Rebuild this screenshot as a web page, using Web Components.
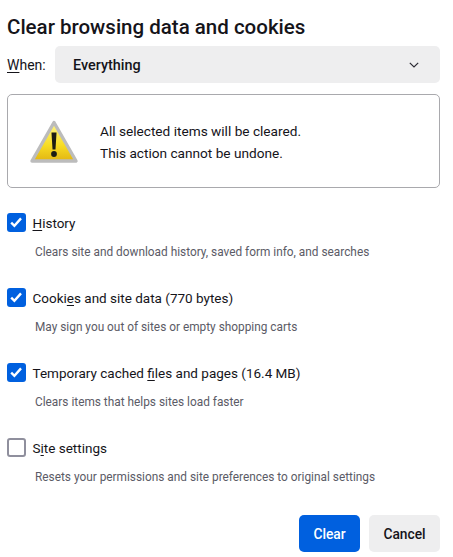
<!DOCTYPE html>
<html>
<head>
<meta charset="utf-8">
<style>
  html, body { margin: 0; background: #fff; }
  body { font-family: Roboto, "Noto Sans", sans-serif; color: #15141a; }
</style>
</head>
<body>
<clear-dialog></clear-dialog>
<script>
const keyStyle = `u { text-decoration-thickness: 1px; text-underline-offset: 2px; }`;

class WhenSelect extends HTMLElement {
  constructor() {
    super();
    this.attachShadow({ mode: 'open' });
    this.shadowRoot.innerHTML = `
      <style>
        ${keyStyle}
        :host { display: flex; align-items: center; height: 37px; }
        .label { font-size: 14px; width: 48px; flex: none; padding-top: 1px; }
        .box {
          flex: 1; height: 37px; box-sizing: border-box; background: #eeeeef; border-radius: 5px;
          display: flex; align-items: center; justify-content: space-between; padding: 1px 21px 0 18px;
          font-size: 14.4px; font-weight: 500;
        }
        svg { display: block; }
      </style>
      <span class="label"><u>W</u>hen:</span>
      <div class="box"><slot></slot>
        <svg width="10" height="6" viewBox="0 0 10 6"><path d="M.8.8 5 5 9.2.8" fill="none" stroke="#2b2a33" stroke-width="1.2"/></svg>
      </div>`;
  }
}

class WarningBox extends HTMLElement {
  constructor() {
    super();
    this.attachShadow({ mode: 'open' });
    this.shadowRoot.innerHTML = `
      <style>
        :host {
          display: flex; align-items: center; gap: 21px; height: 94px; box-sizing: border-box;
          border: 1px solid #a9a9ad; border-radius: 5px; padding: 0 0 0 21px;
          font-size: 13.65px; line-height: 22px;
        }
        svg { display: block; flex: none; margin-top: 1px; }
        div { padding-top: 1px; }
      </style>
      <svg width="50" height="46" viewBox="0 0 50 46">
        <defs>
          <linearGradient id="y" x1="0" y1="0" x2="0" y2="1">
            <stop offset="0" stop-color="#fff68a"/><stop offset=".6" stop-color="#f7dc22"/><stop offset="1" stop-color="#e2b512"/>
          </linearGradient>
        </defs>
        <path d="M25 3.5 47 42H3Z" fill="url(#y)" stroke="#bcbcbc" stroke-width="3.4" stroke-linejoin="round"/>
        <path d="M22.5 13.5h5l-1 17h-3Z" fill="#1c1c14"/>
        <circle cx="25" cy="35" r="2.9" fill="#1c1c14"/>
      </svg>
      <div><slot></slot></div>`;
  }
}

class ClearOption extends HTMLElement {
  constructor() {
    super();
    this.attachShadow({ mode: 'open' });
    const checked = this.hasAttribute('checked');
    this.shadowRoot.innerHTML = `
      <style>
        ${keyStyle}
        :host { display: block; height: 75px; }
        .row { display: flex; align-items: center; gap: 7px; height: 19px; font-size: 13.5px; }
        .row span { padding-top: 1px; }
        .check {
          width: 18.5px; height: 18.5px; box-sizing: border-box; border-radius: 3px; flex: none;
          background: ${checked ? '#0060df' : '#fff'};
          border: ${checked ? '0' : '2px solid #8f8f9d'};
        }
        svg { display: block; }
        .desc { margin: 11px 0 0 28px; font-size: 11.85px; line-height: 18px; color: #5b5b66; }
      </style>
      <div class="row">
        <div class="check">${checked ? '<svg width="18" height="18" viewBox="0 0 18 18"><path d="M4.2 9.6 7.4 12.8 14 5.4" fill="none" stroke="#fff" stroke-width="2.4"/></svg>' : ''}</div>
        <span><slot></slot></span>
      </div>
      <div class="desc"><slot name="desc"></slot></div>`;
  }
}

class DialogButton extends HTMLElement {
  constructor() {
    super();
    this.attachShadow({ mode: 'open' });
    const primary = this.hasAttribute('primary');
    this.shadowRoot.innerHTML = `
      <style>
        :host {
          display: flex; align-items: center; justify-content: center; height: 37px; border-radius: 5px;
          font-size: 13.8px; font-weight: 500; padding: 0 14px;
          background: ${primary ? '#0060df' : '#eeeeef'}; color: ${primary ? '#fff' : '#15141a'};
        }
      </style>
      <slot></slot>`;
  }
}

class ClearDialog extends HTMLElement {
  constructor() {
    super();
    this.attachShadow({ mode: 'open' });
    this.shadowRoot.innerHTML = `
      <style>
        ${keyStyle}
        :host { display: block; box-sizing: border-box; width: 453px; height: 557px; padding: 14px 13px 0 7px; overflow: hidden; }
        h1 { margin: 0 0 5px; font-size: 20.5px; line-height: 27px; font-weight: 500; }
        warning-box { margin-top: 11px; }
        .options { margin-top: 25px; height: 301px; }
        .buttons { display: flex; justify-content: flex-end; gap: 9px; margin-top: 1px; }
        dialog-button[primary] { width: 33px; }
        dialog-button:not([primary]) { width: 43px; }
      </style>
      <h1>Clear browsing data and cookies</h1>
      <when-select>Everything</when-select>
      <warning-box>All selected items will be cleared.<br>This action cannot be undone.</warning-box>
      <div class="options">
        <clear-option checked><u>H</u>istory<span slot="desc">Clears site and download history, saved form info, and searches</span></clear-option>
        <clear-option checked>Cooki<u>e</u>s and site data (770 bytes)<span slot="desc">May sign you out of sites or empty shopping carts</span></clear-option>
        <clear-option checked>Temporary cached <u>f</u>iles and pages (16.4 MB)<span slot="desc">Clears items that helps sites load faster</span></clear-option>
        <clear-option>S<u>i</u>te settings<span slot="desc">Resets your permissions and site preferences to original settings</span></clear-option>
      </div>
      <div class="buttons">
        <dialog-button primary>Clear</dialog-button>
        <dialog-button>Cancel</dialog-button>
      </div>`;
  }
}

customElements.define('when-select', WhenSelect);
customElements.define('warning-box', WarningBox);
customElements.define('clear-option', ClearOption);
customElements.define('dialog-button', DialogButton);
customElements.define('clear-dialog', ClearDialog);
</script>
</body>
</html>
